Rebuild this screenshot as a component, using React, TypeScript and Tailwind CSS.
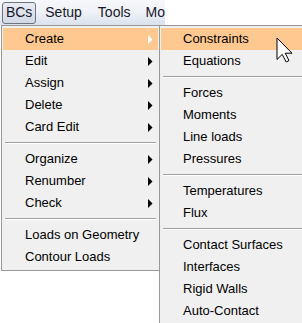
import React from "react";

type Item = { label: string; sub?: boolean; active?: boolean } | "sep";

const mainItems: Item[] = [
  { label: "Create", sub: true, active: true },
  { label: "Edit", sub: true },
  { label: "Assign", sub: true },
  { label: "Delete", sub: true },
  { label: "Card Edit", sub: true },
  "sep",
  { label: "Organize", sub: true },
  { label: "Renumber", sub: true },
  { label: "Check", sub: true },
  "sep",
  { label: "Loads on Geometry" },
  { label: "Contour Loads" },
];

const subItems: Item[] = [
  { label: "Constraints", active: true },
  { label: "Equations" },
  "sep",
  { label: "Forces" },
  { label: "Moments" },
  { label: "Line loads" },
  { label: "Pressures" },
  "sep",
  { label: "Temperatures" },
  { label: "Flux" },
  "sep",
  { label: "Contact Surfaces" },
  { label: "Interfaces" },
  { label: "Rigid Walls" },
  { label: "Auto-Contact" },
];

const Arrow = ({ white }: { white?: boolean }) => (
  <svg width="5" height="9" viewBox="0 0 5 9" className="shrink-0">
    <polygon points="0,0 4.5,4.5 0,9" fill={white ? "#ffffff" : "#000000"} />
  </svg>
);

const MenuList = ({ items }: { items: Item[] }) => (
  <div className="flex flex-col px-[1px] py-[2px]">
    {items.map((it, i) =>
      it === "sep" ? (
        <div key={i} className="h-[10px] flex flex-col justify-center px-[2px]">
          <div className="h-[1px] bg-[#a0a0a0]" />
          <div className="h-[1px] bg-white" />
        </div>
      ) : (
        <div
          key={i}
          className={`h-[22px] flex items-center pl-[22px] pr-[5px] ${
            it.active ? "bg-[#fec891]" : ""
          }`}
        >
          <span className="flex-1 whitespace-nowrap">{it.label}</span>
          {it.sub && <Arrow white={it.active} />}
        </div>
      )
    )}
  </div>
);

const Cursor = () => (
  <svg
    width="17"
    height="26"
    viewBox="0 0 17 26"
    className="absolute left-[276px] top-[37px]"
  >
    <path
      d="M1 1 V22.5 L6.2 17.4 L10.2 25 L13 23.6 L9.2 16.2 H16 Z"
      fill="#ffffff"
      stroke="#000000"
      strokeWidth="1"
      strokeLinejoin="miter"
    />
  </svg>
);

export default function App() {
  return (
    <div
      className="relative w-[302px] h-[323px] overflow-hidden bg-white text-black"
      style={{ fontFamily: '"Liberation Sans", Arial, sans-serif' }}
    >
      <div className="w-[165px] h-[25px] flex items-center overflow-hidden bg-gradient-to-b from-[#f7f8fa] via-[#eef1f6] to-[#dbe2ee] text-[14px] text-[#17172a]">
        <div className="ml-[2px] w-[35px] h-[22px] flex items-center justify-center rounded-[3px] border border-[#6e7480] bg-gradient-to-b from-[#e8ecf2] to-[#d3dae6]">
          BCs
        </div>
        <span className="ml-[9px]">Setup</span>
        <span className="ml-[16px]">Tools</span>
        <span className="ml-[15px] whitespace-nowrap">Mo</span>
      </div>
      <div className="flex items-start text-[13px]">
        <div className="ml-[1px] w-[159px] shrink-0 border border-[#979797] bg-[#f0f0f0]">
          <MenuList items={mainItems} />
        </div>
        <div className="-ml-[1px] w-[160px] shrink-0 border border-[#979797] bg-[#f0f0f0]">
          <MenuList items={subItems} />
        </div>
      </div>
      <Cursor />
    </div>
  );
}
